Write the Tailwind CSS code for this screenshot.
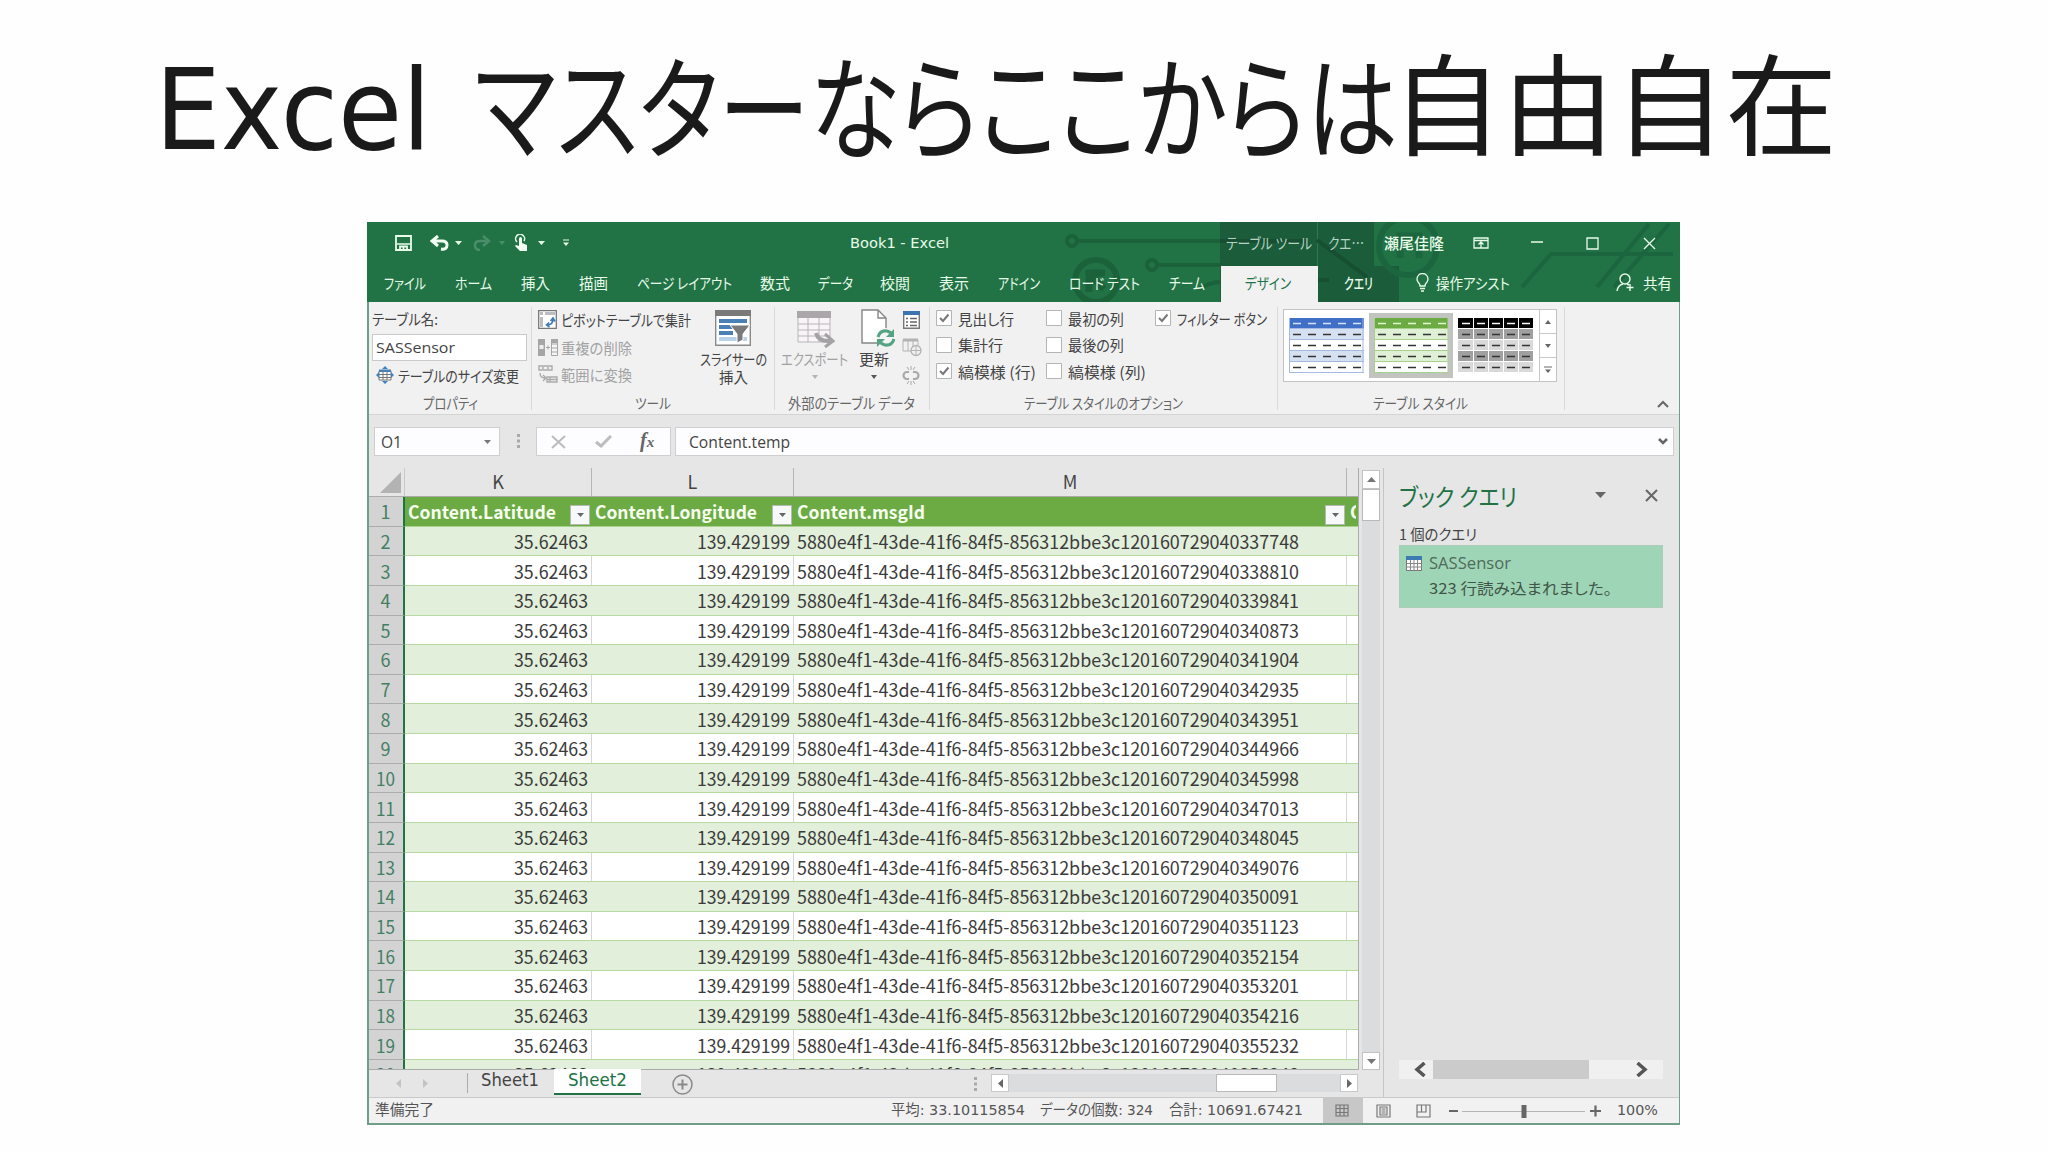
<!DOCTYPE html>
<html lang="ja">
<head>
    <meta charset="UTF-8">
    <meta name="viewport" content="width=device-width, initial-scale=1.0">
    <title>Excel マスターならここからは自由自在</title>
    <script src="https://cdn.jsdelivr.net/npm/@tailwindcss/browser@4"></script>
    <style>
        body {
            font-family: "Open Sans", "Noto Sans CJK JP", sans-serif;
            font-feature-settings: "palt";
        }
        /* Labels with a fixed width, see fitLabels() */
        .fit {
            display: block;
            flex: none;
            white-space: nowrap;
            transform-origin: 0 50%;
        }
        .verdana {
            font-family: "DejaVu Sans", "Noto Sans CJK JP", sans-serif;
        }
        .gothic {
            font-family: "Noto Sans CJK JP", sans-serif;
        }
        svg {
            flex: none;
        }
    </style>
</head>
<body class="bg-[#fefefe] w-[2048px] h-[1152px] overflow-hidden">
    <!-- Slide title -->
    <h1 class="h-[222px] pl-[155px] flex items-start text-[#1b1a1b] leading-none">
        <span class="fit verdana text-[112px] mt-[54px]" data-w="276">Excel</span>
        <span class="fit gothic text-[112px] mt-[46px] ml-[43px]" data-w="924">マスターならここからは</span>
        <span class="fit gothic text-[110px] mt-[44px] -ml-[7px]" data-w="446">自由自在</span>
    </h1>

    <!-- Excel window -->
    <div class="relative ml-[367px] w-[1313px] h-[903px] flex flex-col bg-[#e6e6e7] border-l-2 border-r border-b-2 border-[#6f9d88] text-[15px] leading-none text-[#444]">

        <!-- Title bar + tabs -->
        <div class="relative h-[80px] -ml-[2px] -mr-px flex-none bg-[#217346] text-[#e9fbe9] overflow-hidden">
            <svg class="absolute left-0 top-0" width="1313" height="80" fill="none">
                <g stroke="#1b623b" stroke-width="4">
                    <circle cx="705" cy="19" r="5"/><path d="M711 19H853"/>
                    <circle cx="785" cy="43" r="5"/><path d="M791 43H853"/>
                    <circle cx="729" cy="59" r="21" stroke-width="6"/><path d="M722 70V51H738M722 51L737 67" stroke-width="7"/>
                    <path d="M832 67Q843 60 853 60"/>
                </g>
                <rect x="853" y="0" width="154" height="80" fill="#1b5c3a"/>
                <rect x="949" y="44" width="83" height="36" fill="#1b5c3a"/>
                <path d="M950.500 0V44" stroke="#2e7a50"/>
                <g stroke="#174f32" stroke-width="4">
                    <path d="M853 19H940M950 18L1000 55"/><path d="M950 58H962"/>
                </g>
                <g stroke="#1b663e" stroke-width="6">
                    <circle cx="1041" cy="24" r="29"/><path d="M1033 36V14H1052V36" stroke-width="7"/>
                    <path d="M1155 65L1184 32H1306M1230 65L1282 2M1247 65L1302 2" stroke-width="4"/>
                </g>
            </svg>

            <div class="relative h-[42px] flex items-center">
                <svg class="ml-[28px]" width="17" height="16" fill="none" stroke="#e9fbe9" stroke-width="1.800"><path d="M1 1H16V15H1Z"/><path d="M2 9H15" stroke-width="1.500"/><path d="M5 15V11.500H12V15M8.500 12V15"/></svg>
                <svg class="ml-[18px]" width="19" height="16" fill="none" stroke="#f4fff4" stroke-width="3"><path d="M8 1L2 6L8 11M2 6H12Q17 6 17 10Q17 15 11 14"/></svg>
                <svg class="ml-[6px]" width="7" height="4"><path d="M0 0H7L3.500 4Z" fill="#e9fbe9"/></svg>
                <svg class="ml-[11px]" width="18" height="16" fill="none" stroke="#4a8e69" stroke-width="2.500"><path d="M10 1L16 6L10 11M16 6H7Q2 6 2 10Q2 15 7 15"/></svg>
                <svg class="ml-[8px]" width="6" height="4"><path d="M0 0H6L3 4Z" fill="#4a8e69"/></svg>
                <svg class="ml-[9px]" width="14" height="18" fill="#f4fff4"><path d="M5 5Q5 3 6.500 3Q8 3 8 5V9L13 11V17H6L1 12L2 11L5 12Z"/><path d="M3 8A4.500 4.500 0 1 1 10 7" fill="none" stroke="#e9fbe9" stroke-width="1.500"/></svg>
                <svg class="ml-[10px]" width="7" height="4"><path d="M0 0H7L3.500 4Z" fill="#e9fbe9"/></svg>
                <svg class="ml-[18px]" width="6" height="8"><path d="M0 1H6" stroke="#e9fbe9"/><path d="M0 3.500H6L3 7Z" fill="#e9fbe9"/></svg>
                <span class="fit verdana ml-[281px] text-[14.500px]" data-w="99">Book1 - Excel</span>
                <span class="fit gothic ml-[277px] -mt-[2px] text-[15px] text-[#b5d3c0]" data-w="86">テーブル ツール</span>
                <span class="fit gothic ml-[16px] -mt-[2px] text-[15px] text-[#b5d3c0]" data-w="36">クエ…</span>
                <span class="fit gothic ml-[20px] -mt-[2px] text-[15px] font-medium" data-w="60">瀬尾佳隆</span>
                <svg class="ml-[29px]" width="16" height="12" fill="none" stroke="#e9fbe9" stroke-width="1.300"><path d="M1 1H15V11H1ZM1 3.500H15M8 11V5M5.500 7.500L8 5L10.500 7.500"/></svg>
                <svg class="ml-[42px] -mt-[2px]" width="12" height="2"><path d="M0 1H12" stroke="#e9fbe9" stroke-width="1.500"/></svg>
                <svg class="ml-[43px]" width="13" height="13" fill="none" stroke="#e9fbe9" stroke-width="1.300"><path d="M1 1H12V12H1Z"/></svg>
                <svg class="ml-[44px]" width="13" height="13" fill="none" stroke="#e9fbe9" stroke-width="1.400"><path d="M1 1L12 12M12 1L1 12"/></svg>
            </div>

            <div class="relative h-[38px] pl-[17px] pb-[2px] flex items-center gap-[29px] gothic text-[15px]">
                <span class="fit" data-w="42">ファイル</span>
                <span class="fit" data-w="37">ホーム</span>
                <span class="fit" data-w="29">挿入</span>
                <span class="fit" data-w="29">描画</span>
                <span class="fit" data-w="95">ページ レイアウト</span>
                <span class="fit -ml-px" data-w="30">数式</span>
                <span class="fit -ml-px" data-w="35">データ</span>
                <span class="fit -ml-[2px]" data-w="30">校閲</span>
                <span class="fit" data-w="30">表示</span>
                <span class="fit" data-w="42">アドイン</span>
                <span class="fit" data-w="71">ロード テスト</span>
                <span class="fit" data-w="36">チーム</span>
                <div class="w-[97px] h-[36px] -ml-[13px] -mb-[2px] self-end bg-[#f1f1f2] text-[#217346] flex items-center justify-center pr-[3px]">
                    <span class="fit -mt-[3px]" data-w="46">デザイン</span>
                </div>
                <span class="fit -ml-[3px] font-medium" data-w="29">クエリ</span>
                <div class="ml-[14px] flex items-center gap-[7px]">
                    <svg width="13" height="19" fill="none" stroke="#e9fbe9" stroke-width="1.300"><path d="M4 13Q4 11 2 9Q1 7.500 1 6A5.500 5.500 0 0 1 12 6Q12 7.500 11 9Q9 11 9 13ZM4 15.500H9M5 18H8"/></svg>
                    <span class="fit" data-w="74">操作アシスト</span>
                </div>
                <div class="ml-[77px] flex items-center gap-[9px]">
                    <svg width="18" height="19" fill="none" stroke="#e9fbe9" stroke-width="1.400"><circle cx="9" cy="6" r="5"/><path d="M1 18Q2 12 7 11M11 11L13 12M14 11V18M10.500 14.500H17.500"/></svg>
                    <span class="fit" data-w="29">共有</span>
                </div>
            </div>
        </div>

        <!-- Ribbon -->
        <div class="relative h-[113px] flex-none pt-[5px] flex bg-[#f1f1f2] border-b border-[#d4d4d5] gothic">
            <div class="w-[163px] h-[103px] pl-[3px] pt-[3px] border-r border-[#dadadb] flex flex-col">
                <span class="fit h-[18px] leading-[18px]" data-w="66">テーブル名:</span>
                <div class="mt-[6px] w-[155px] h-[27px] bg-white border border-[#c9c9ca] pl-[3px] flex items-center">
                    <span class="fit text-[15px] font-['Open_Sans']" data-w="79">SASSensor</span>
                </div>
                <div class="h-[28px] pl-[4px] flex items-center gap-[4px]">
                    <svg width="18" height="18"><path d="M3 5H15V14H3Z" fill="#fff" stroke="#777"/><path d="M3 3.500H15V6H3Z" fill="#4a80b5"/><path d="M3 8.500H15M3 11.500H15M7 6V14M11 6V14" stroke="#777"/><path d="M9 0L12 3H6ZM9 18L6 15H12ZM0 9L3 6V12ZM18 9L15 6V12Z" fill="#3d84c6"/></svg>
                    <span class="fit" data-w="121">テーブルのサイズ変更</span>
                </div>
                <span class="fit mt-auto -mb-[2px] ml-[51px] h-[18px] leading-[18px] text-[#666] text-[14.500px]" data-w="55">プロパティ</span>
            </div>

            <div class="w-[243px] h-[103px] pl-[6px] border-r border-[#dadadb] flex flex-col">
                <div class="flex">
                    <div class="w-[155px] pt-px flex flex-col">
                        <div class="h-[23px] flex items-center gap-[4px]">
                            <svg width="19" height="19" fill="none"><path d="M.7.700H18.300V18.300H.7Z" fill="#fff" stroke="#777" stroke-width="1.300"/><path d="M2 2H5V5H2ZM2 7H5V17H2ZM7 2H17V5H7Z" fill="#bdbdbd"/><path d="M9 15Q15 15 15 9M12.500 11L15 8L17 11.500M11 12.500L8.500 15L11.500 17" stroke="#3d7ab8" stroke-width="1.600"/></svg>
                            <span class="fit" data-w="130">ピボットテーブルで集計</span>
                        </div>
                        <div class="h-[33px] flex items-center gap-[3px] text-[#a2a2a3]">
                            <svg width="20" height="17"><path d="M0 0H7V17H0Z" fill="#a5a5a5"/><path d="M1.500 6H5.500V10H1.500Z" fill="#eee"/><path d="M8 8.500H12M10 6.500V10.500" stroke="#a5a5a5"/><path d="M13.500.5H19.500V16.500H13.500ZM13.500 5H19.500M13.500 9H19.500M13.500 13H19.500" fill="#f5f5f5" stroke="#a5a5a5"/><path d="M13 0H20V4H13Z" fill="#a5a5a5"/></svg>
                            <span class="fit -mt-px" data-w="71">重複の削除</span>
                        </div>
                        <div class="h-[20px] flex items-center gap-[3px] text-[#a2a2a3]">
                            <svg width="20" height="18" fill="none" stroke="#aaa" stroke-width="1.400"><path d="M1 1H14V5H1ZM4 3H6M9 3H11M9 12H19V17H9ZM12 12V17M9 14.500H19"/><path d="M2 8Q2 13 7 13M5 10L8 13L5 16"/></svg>
                            <span class="fit" data-w="71">範囲に変換</span>
                        </div>
                    </div>
                    <div class="w-[80px] pt-[3px] flex flex-col items-center">
                        <svg width="36" height="36"><path d="M.7.700H35.300V35.300H.7Z" fill="#fff" stroke="#8a8a8a" stroke-width="1.400"/><path d="M0 0H36V6H0Z" fill="#7a7a7a"/><path d="M4 9H32V13H4ZM4 15H20V19H4ZM4 21H18V25H4Z" fill="#4a80b5"/><path d="M4 27H32V31H4Z" fill="#b9d2e8"/><path d="M15 15H35L28 24V30L22 33V24Z" fill="#7a7a7a" stroke="#fff"/></svg>
                        <span class="fit h-[18px] mt-[4px] leading-[18px]" data-w="67">スライサーの</span>
                        <span class="fit h-[18px] leading-[18px]" data-w="29">挿入</span>
                    </div>
                </div>
                <span class="fit mt-auto -mb-[2px] ml-[97px] h-[18px] leading-[18px] text-[#666] text-[14.500px]" data-w="36">ツール</span>
            </div>

            <div class="w-[155px] h-[103px] pl-[6px] border-r border-[#dadadb] flex flex-col">
                <div class="flex">
                    <div class="w-[67px] pt-[4px] flex flex-col items-center text-[#a2a2a3]">
                        <svg class="ml-[3px]" width="38" height="37" fill="none"><path d="M1 2H33V31H1Z" fill="#f8f4f8" stroke="#b8b5b8"/><path d="M0 0H34V7H0Z" fill="#aaa7aa"/><path d="M1 13H33M1 19H33M1 25H33M11 7V31M22 7V31" stroke="#b8b5b8"/><path d="M19 22Q21 30 31 30H33" stroke="#a5a2a5" stroke-width="4"/><path d="M28 23L36 30L28 36" stroke="#a5a2a5" stroke-width="3"/></svg>
                        <span class="fit h-[18px] mt-[2px] leading-[18px]" data-w="67">エクスポート</span>
                        <svg class="mt-[7px]" width="6" height="4"><path d="M0 0H6L3 4Z" fill="#b5b5b5"/></svg>
                    </div>
                    <div class="w-[54px] pt-[2px] pl-[11px] flex flex-col">
                        <svg class="ml-[2px]" width="34" height="39" fill="none"><path d="M1 1H17L25 9V34H1Z" fill="#fff" stroke="#858585" stroke-width="1.400"/><path d="M17 1V9H25" stroke="#858585" stroke-width="1.400"/><circle cx="25" cy="29" r="10" fill="#f5f5f5"/><path d="M17 28Q19 21 26 22Q30 23 31 26M33 30Q31 37 24 36Q20 35 18 32" stroke="#54a383" stroke-width="3"/><path d="M33 20V28H25ZM16 38V30H24Z" fill="#54a383"/></svg>
                        <span class="fit h-[18px] mt-[2px] leading-[18px]" data-w="30">更新</span>
                        <svg class="mt-[7px] ml-[12px]" width="6" height="4"><path d="M0 0H6L3 4Z" fill="#555"/></svg>
                    </div>
                    <div class="w-[20px] pt-[4px] flex flex-col gap-[9px]">
                        <svg class="ml-[1px]" width="17" height="18" fill="none"><path d="M.7.700H16.300V17.300H.7Z" fill="#fff" stroke="#777" stroke-width="1.400"/><path d="M0 0H17V4H0Z" fill="#3d73ae"/><path d="M3 7.500H5M3 11H5M3 14.500H5M7 7.500H14M7 11H14M7 14.500H14" stroke="#666" stroke-width="1.500"/></svg>
                        <svg width="20" height="19" fill="none" stroke="#b5b2b5"><path d="M1 2H16V13H1ZM6 2V13M11 2V13"/><path d="M1 2H16" stroke-width="3"/><circle cx="14" cy="12.500" r="5" fill="#f1f1f2" stroke-width="1.300"/><path d="M9 12.500H19M14 8V17"/></svg>
                        <svg width="18" height="19" fill="none" stroke="#aaa8aa" stroke-width="2.200"><path d="M7 6H5A3.500 3.500 0 0 0 5 13H7M11 6H13A3.500 3.500 0 0 1 13 13H11"/><path d="M9 0V4M5 1L7 4M13 1L11 4M9 15V19M5 18L7 15M13 18L11 15" stroke-width="1"/></svg>
                    </div>
                </div>
                <span class="fit mt-auto -mb-[2px] ml-[7px] h-[18px] leading-[18px] text-[#666] text-[14.500px]" data-w="127">外部のテーブル データ</span>
            </div>

            <div class="w-[348px] h-[103px] pl-[6px] border-r border-[#dadadb] flex flex-col">
                <div id="options" class="-mt-[2px] grid grid-cols-[110px_109px_120px] auto-rows-[26.500px]"></div>
                <span class="fit mt-auto -mb-[2px] ml-[88px] h-[18px] leading-[18px] text-[#666] text-[14.500px]" data-w="159">テーブル スタイルのオプション</span>
            </div>

            <div class="w-[287px] h-[103px] pl-[5px] pt-[2px] border-r border-[#dadadb] flex flex-col">
                <div class="w-[274px] h-[73px] border border-[#c3c3c4] bg-white flex items-center">
                    <svg class="ml-[5px]" width="75" height="56" id="styleBlue"></svg>
                    <div class="ml-[5px] w-[84px] h-[65px] border-[5px] border-[#c2c4c0] bg-white"><svg width="74" height="55" id="styleGreen"></svg></div>
                    <svg class="ml-[5px]" width="75" height="56" id="styleBlack"></svg>
                    <div class="ml-auto w-[17px] h-full border-l border-[#c9c9ca] flex flex-col divide-y divide-[#c9c9ca]">
                        <div class="flex-1 flex items-center justify-center"><svg width="6" height="4"><path d="M0 4H6L3 0Z" fill="#666"/></svg></div>
                        <div class="flex-1 flex items-center justify-center"><svg width="6" height="4"><path d="M0 0H6L3 4Z" fill="#666"/></svg></div>
                        <div class="flex-1 flex items-center justify-center"><svg width="8" height="8"><path d="M0 1H8" stroke="#666"/><path d="M1 3.500H7L4 7Z" fill="#666"/></svg></div>
                    </div>
                </div>
                <span class="fit mt-auto -mb-[2px] ml-[90px] h-[18px] leading-[18px] text-[#666] text-[14.500px]" data-w="95">テーブル スタイル</span>
            </div>
            <svg class="ml-[92px] mt-[93px]" width="12" height="8" fill="none" stroke="#666" stroke-width="2"><path d="M1 7L6 2L11 7"/></svg>
        </div>

        <!-- Formula bar -->
        <div class="h-[53px] flex-none pl-[5px] pt-[12px] flex">
            <div class="w-[126px] h-[29px] bg-[#fdfcfe] border border-[#cfcfd0] pl-[6px] pr-[8px] flex items-center justify-between">
                <span class="fit text-[16px]" data-w="21">O1</span>
                <svg width="7" height="4"><path d="M0 0H7L3.500 4Z" fill="#777"/></svg>
            </div>
            <svg class="ml-[17px] mt-[7px]" width="4" height="15"><path d="M0 0H3V3H0ZM0 5.500H3V8.500H0ZM0 11H3V14H0Z" fill="#aaa"/></svg>
            <div class="ml-[15px] w-[135px] h-[29px] bg-[#fdfcfe] border border-[#cfcfd0] flex items-center">
                <svg class="ml-[14px]" width="15" height="14" fill="none" stroke="#bcbcbc" stroke-width="2"><path d="M1 1L14 13M14 1L1 13"/></svg>
                <svg class="ml-[29px]" width="17" height="13" fill="none" stroke="#bcbcbc" stroke-width="3"><path d="M1 7L6 11L16 1"/></svg>
                <span class="ml-[28px] -mt-[4px] font-['Liberation_Serif'] italic text-[20px] text-[#666] font-bold">f<span class="text-[15px]">x</span></span>
            </div>
            <div class="ml-[4px] w-[999px] h-[29px] bg-[#fdfcfe] border border-[#cfcfd0] pl-[13px] pr-[5px] flex items-center justify-between">
                <span class="fit text-[16px]" data-w="101">Content.temp</span>
                <svg width="10" height="7" fill="none" stroke="#666" stroke-width="2.500"><path d="M1 1L5 5L9 1"/></svg>
            </div>
        </div>

        <div class="flex-1 min-h-0 flex">
            <div class="w-[1015px] flex flex-col border-r border-[#c6c6c7]">
                <div class="h-[602px] flex-none flex">
                    <!-- Sheet -->
                    <div class="w-[990px] h-full flex flex-col overflow-hidden border-r border-b border-[#ababac] gothic text-[18px]">
                        <div class="h-[29px] flex-none flex border-b border-[#ababac] text-[#444] leading-[27px] text-center">
                            <div class="w-[36px] flex justify-end items-end pr-[3px] pb-[3px] border-r border-[#c9c9ca]"><svg width="21" height="21"><path d="M21 0V21H0Z" fill="#b3b3b4"/></svg></div>
                            <div class="w-[187px] border-r border-[#b5b5b6]">K</div>
                            <div class="w-[202px] border-r border-[#b5b5b6]">L</div>
                            <div class="w-[553px] border-r border-[#b5b5b6]">M</div>
                        </div>
                        <div id="rows"></div>
                    </div>
                    <!-- Vertical scroll bar -->
                    <div class="ml-[3px] mt-[2px] w-[18px] h-[600px] bg-[#dbdcdd] flex flex-col">
                        <div class="h-[19px] bg-white border border-[#c3c3c4] flex items-center justify-center"><svg width="9" height="5"><path d="M0 5H9L4.500 0Z" fill="#777"/></svg></div>
                        <div class="h-[32px] bg-white border border-[#b9b9ba]"></div>
                        <div class="mt-auto h-[18px] bg-white border border-[#c3c3c4] flex items-center justify-center"><svg width="9" height="5"><path d="M0 0H9L4.500 5Z" fill="#777"/></svg></div>
                    </div>
                </div>

                <!-- Sheet tabs -->
                <div class="h-[27px] flex-none flex verdana text-[17px]">
                    <svg class="ml-[27px] mt-[9px]" width="5" height="9"><path d="M5 0V9L0 4.500Z" fill="#c3c3c4"/></svg>
                    <svg class="ml-[22px] mt-[9px]" width="5" height="9"><path d="M0 0V9L5 4.500Z" fill="#c3c3c4"/></svg>
                    <div class="ml-[39px] mt-[3px] w-px h-[20px] bg-[#ababac]"></div>
                    <span class="fit ml-[13px] mt-[2px]" data-w="58">Sheet1</span>
                    <div class="ml-[15px] -mt-px w-[87px] h-[26px] bg-white border-b-2 border-[#217346] text-[#217346] flex justify-center">
                        <span class="fit mt-[3px]" data-w="59">Sheet2</span>
                    </div>
                    <svg class="ml-[31px] mt-[4px]" width="21" height="21" fill="none" stroke="#8a8a8a" stroke-width="1.500"><circle cx="10.500" cy="10.500" r="9.500"/><path d="M5.500 10.500H15.500M10.500 5.500V15.500" stroke-width="2"/></svg>
                    <svg class="ml-[281px] mt-[7px]" width="4" height="15"><path d="M0 0H3V3H0ZM0 5.500H3V8.500H0ZM0 11H3V14H0Z" fill="#aaa"/></svg>
                    <div class="ml-[13px] mt-[4px] w-[367px] h-[18px] bg-[#dbdcdd] flex">
                        <div class="w-[18px] bg-white border border-[#c9c9ca] flex items-center justify-center"><svg width="5" height="9"><path d="M5 0V9L0 4.500Z" fill="#666"/></svg></div>
                        <div class="ml-[207px] w-[61px] bg-white border border-[#b9b9ba]"></div>
                        <div class="ml-auto w-[18px] bg-white border border-[#c9c9ca] flex items-center justify-center"><svg width="5" height="9"><path d="M0 0V9L5 4.500Z" fill="#666"/></svg></div>
                    </div>
                </div>
            </div>

            <!-- Workbook queries pane -->
            <div class="flex-1 pl-[15px] pr-[16px] pt-[13px] flex flex-col gothic">
                <div class="h-[30px] flex items-center">
                    <span class="fit text-[24px] text-[#217346]" data-w="118">ブック クエリ</span>
                    <svg class="ml-[78px] -mt-[2px]" width="11" height="6"><path d="M0 0H11L5.500 6Z" fill="#666"/></svg>
                    <svg class="ml-[39px] -mt-[2px]" width="13" height="13" fill="none" stroke="#666" stroke-width="2"><path d="M1 1L12 12M12 1L1 12"/></svg>
                </div>
                <span class="fit mt-[14px] h-[18px] leading-[18px] text-[15px]" data-w="78">1 個のクエリ</span>
                <div class="mt-[2px] h-[63px] bg-[#9fd5b7] border border-[#a9cdb8] pl-[6px] flex">
                    <svg class="mt-[10px]" width="16" height="15"><path d="M.5.500H15.500V14.500H.5Z" fill="#fff" stroke="#777"/><path d="M0 0H16V4H0Z" fill="#3d7ab0"/><path d="M0 7.500H16M0 11H16M4.500 4V15M8 4V15M11.500 4V15" stroke="#888"/></svg>
                    <div class="ml-[7px] text-[#4f6b5b]">
                        <span class="fit mt-[7px] h-[20px] leading-[20px] text-[16.500px] font-['Open_Sans']" data-w="82">SASSensor</span>
                        <span class="fit mt-[6px] h-[18px] leading-[18px] text-[15px] text-[#3f5548]" data-w="183">323 行読み込まれました。</span>
                    </div>
                </div>
                <div class="mt-auto mb-[18px] h-[19px] bg-[#f0f0f1] flex items-center">
                    <svg class="ml-[15px]" width="12" height="15" fill="none" stroke="#555" stroke-width="3.500"><path d="M10.500 1L3 7.500L10.500 14"/></svg>
                    <div class="ml-[7px] w-[156px] h-[19px] bg-[#cbcbcc]"></div>
                    <svg class="ml-[47px]" width="12" height="15" fill="none" stroke="#555" stroke-width="3.500"><path d="M1.500 1L9 7.500L1.500 14"/></svg>
                </div>
            </div>
        </div>

        <!-- Status bar -->
        <div class="h-[26px] flex-none bg-[#f1f1f2] border-t border-[#c9c9ca] flex items-center verdana text-[14.500px] text-[#555]">
            <span class="fit ml-[6px]" data-w="59">準備完了</span>
            <span class="fit ml-[457px]" data-w="134">平均: 33.10115854</span>
            <span class="fit ml-[15px]" data-w="113">データの個数: 324</span>
            <span class="fit ml-[16px]" data-w="134">合計: 10691.67421</span>
            <div class="ml-[20px] w-[40px] h-full bg-[#c7c7c8] flex items-center justify-center">
                <svg class="-ml-[2px]" width="14" height="13" fill="none" stroke="#777" stroke-width="1.200"><path d="M1 1H13V12H1ZM1 4.500H13M1 8.500H13M5 1V12M9 1V12"/></svg>
            </div>
            <svg class="ml-[13px]" width="15" height="14" fill="none" stroke="#777" stroke-width="1.200"><path d="M1 1H14V13H1ZM4 3H11V11H4ZM5.500 5H9.500M5.500 7H9.500M5.500 9H9.500"/></svg>
            <svg class="ml-[25px]" width="15" height="14" fill="none" stroke="#777" stroke-width="1.200"><path d="M1 1H14V13H1ZM1 8H10V1M5.500 1V8"/></svg>
            <svg class="ml-[18px]" width="153" height="14"><path d="M0 7H9M141 7H152M146.500 1.500V12.500" stroke="#666" stroke-width="2.200"/><path d="M13 7.500H136" stroke="#b5b5b6"/><path d="M72.500 1H77.500V14H72.500Z" fill="#666"/></svg>
            <span class="fit ml-[15px]" data-w="41">100%</span>
        </div>
    </div>

    <script>
        // Table style options: [label, width, checked], column by column in each row
        const options = [
            ['見出し行', 56, true], ['最初の列', 56, false], ['フィルター ボタン', 90, true],
            ['集計行', 45, false], ['最後の列', 56, false], null,
            ['縞模様 (行)', 78, true], ['縞模様 (列)', 78, false], null
        ];
        document.getElementById('options').innerHTML = options.map(o => o ? `
            <div class="flex items-center gap-[6px]">
                <svg width="16" height="16" fill="none"><path d="M.5.500H15.500V15.500H.5Z" fill="#fff" stroke="#b5b5b6"/>${o[2] ? '<path d="M4 8L7 11L12.500 4.500" stroke="#777" stroke-width="2"/>' : ''}</svg>
                <span class="fit" data-w="${o[1]}">${o[0]}</span>
            </div>` : '<div></div>').join('');

        // Table style previews
        function preview(id, fills, line, headDash, split) {
            let s = '';
            fills.forEach((f, r) => {
                s += `<rect x="0" y="${r * 11}" width="75" height="11" fill="${f}"/>`;
                s += `<path d="M0 ${r * 11 + 10.5}H75" stroke="${line}"/>`;
                for (let c = 0; c < 5; c++) {
                    s += `<path d="M${c * 15 + 4} ${r * 11 + 5.5}h8" stroke="${r ? '#333' : headDash}" stroke-width="1.500"/>`;
                }
            });
            if (split) {
                s += '<path d="M15.500 0V56M30.500 0V56M45.500 0V56M60.500 0V56" stroke="#fff"/>';
            } else {
                s += `<path d="M.5 0V55M74 0V55" stroke="${line}"/>`;
            }
            document.getElementById(id).innerHTML = s;
        }
        preview('styleBlue', ['#3f6fc6', '#d5e1f1', '#fff', '#d5e1f1', '#fff'], '#a3b9e3', '#d5e5ff');
        preview('styleGreen', ['#6cab43', '#dff0d6', '#fff', '#dff0d6', '#fff'], '#a9d18e', '#e5ffd5');
        preview('styleBlack', ['#000', '#a0a0a0', '#d9d9d9', '#a0a0a0', '#d9d9d9'], '#fff', '#fff', true);

        // Sheet rows
        const ids = ['337748', '338810', '339841', '340873', '341904', '342935', '343951', '344966', '345998', '347013',
            '348045', '349076', '350091', '351123', '352154', '353201', '354216', '355232', '356248'];
        const filter = `<div class="w-[20px] h-[20px] mb-px bg-[#f6f8f9] border border-[#b5b9b5] flex items-center justify-center self-end flex-none"><svg width="7" height="4"><path d="M0 0H7L3.500 4Z" fill="#666"/></svg></div>`;
        const head = n => `<div class="w-[36px] flex-none bg-[#d3d3d4] border-b border-[#ababac] border-r-2 border-r-[#217346] text-[#437f62] flex items-center justify-center pr-px"><span class="fit" data-w="${n > 9 ? 19 : 10}">${n}</span></div>`;
        let html = `<div class="h-[29.625px] flex">${head(1)}
            <div class="flex-1 bg-[#6cab43] text-[#f7fff0] font-bold border-b border-[#a9d18e] flex items-center">
                <div class="w-[187px] h-full pl-[3px] pr-[2px] flex items-center justify-between"><span class="fit" data-w="148">Content.Latitude</span>${filter}</div>
                <div class="w-[202px] h-full pl-[3px] pr-[2px] flex items-center justify-between"><span class="fit" data-w="162">Content.Longitude</span>${filter}</div>
                <div class="w-[553px] h-full pl-[3px] pr-[2px] flex items-center justify-between"><span class="fit" data-w="128">Content.msgId</span>${filter}</div>
                <div class="w-[9px] h-full pl-[3px] flex items-center overflow-hidden">C</div>
            </div></div>`;
        ids.forEach((id, i) => {
            const band = i % 2 ? 'bg-white' : 'bg-[#e2efda]';
            const sep = i % 2 ? 'border-[#d5d7d5]' : 'border-transparent';
            html += `<div class="h-[29.625px] flex">${head(i + 2)}
                <div class="flex-1 ${band} text-[#3b3b3b] border-b border-[#b9d9a3] flex items-center">
                    <div class="w-[187px] h-full pr-[3px] border-r ${sep} flex items-center justify-end"><span class="fit" data-w="74">35.62463</span></div>
                    <div class="w-[202px] h-full pr-[3px] border-r ${sep} flex items-center justify-end"><span class="fit" data-w="93">139.429199</span></div>
                    <div class="w-[553px] h-full pl-[3px] border-r ${sep} flex items-center"><span class="fit" data-w="502">5880e4f1-43de-41f6-84f5-856312bbe3c120160729040${id}</span></div>
                </div></div>`;
        });
        document.getElementById('rows').innerHTML = html;

        // Squeeze or stretch each label to its width
        function fitLabels() {
            document.querySelectorAll('.fit').forEach(el => {
                el.style.transform = 'none';
                const range = document.createRange();
                range.selectNodeContents(el);
                const natural = range.getBoundingClientRect().width;
                el.style.width = el.dataset.w + 'px';
                el.style.transform = `scaleX(${el.dataset.w / natural})`;
            });
        }
        fitLabels();
        // Widths change once the styles and fonts have arrived
        window.addEventListener('load', fitLabels);
        document.fonts.ready.then(fitLabels);
        new ResizeObserver(fitLabels).observe(document.querySelector('h1'));
        setTimeout(fitLabels, 100);
    </script>
</body>
</html>
